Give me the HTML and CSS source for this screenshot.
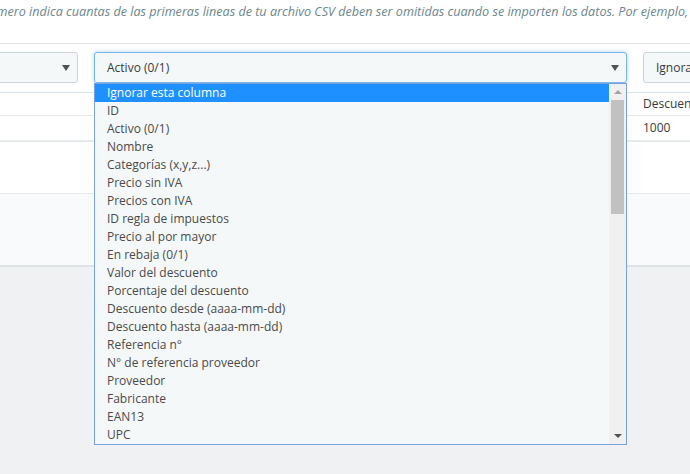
FILE: index.html
```html
<!DOCTYPE html>
<html lang="es">
<head>
<meta charset="utf-8">
<link rel="stylesheet" href="styles.css">
</head>
<body>
<div class="panel">
  <p class="help"><span class="help-text">número indica cuantas de las primeras lineas de tu archivo CSV deben ser omitidas cuando se importen los datos. Por ejemplo, establece este valor a 1 para omitir la cabecera.</span></p>
  <div class="table-clip">
    <div class="table">
      <div class="row select-row">
        <div class="cell"><div class="select"><span class="sel-text"></span><span class="caret"></span></div></div>
        <div class="cell">
          <div class="select-wrap">
            <div class="select focused"><span class="sel-text">Activo (0/1)</span><span class="caret"></span></div>
            <div class="dropdown">
              <ul class="options">
                <li class="active">Ignorar esta columna</li>
                <li>ID</li>
                <li>Activo (0/1)</li>
                <li>Nombre</li>
                <li>Categorías (x,y,z...)</li>
                <li>Precio sin IVA</li>
                <li>Precios con IVA</li>
                <li>ID regla de impuestos</li>
                <li>Precio al por mayor</li>
                <li>En rebaja (0/1)</li>
                <li>Valor del descuento</li>
                <li>Porcentaje del descuento</li>
                <li>Descuento desde (aaaa-mm-dd)</li>
                <li>Descuento hasta (aaaa-mm-dd)</li>
                <li>Referencia n°</li>
                <li>N° de referencia proveedor</li>
                <li>Proveedor</li>
                <li>Fabricante</li>
                <li>EAN13</li>
                <li>UPC</li>
              </ul>
              <div class="scrollbar">
                <span class="arrow up"></span>
                <span class="thumb"></span>
                <span class="arrow down"></span>
              </div>
            </div>
          </div>
        </div>
        <div class="cell"><div class="select"><span class="sel-text">Ignorar esta columna</span><span class="caret"></span></div></div>
      </div>
      <div class="row head-row">
        <div class="cell"></div>
        <div class="cell"></div>
        <div class="cell">Descuento</div>
      </div>
      <div class="row data-row">
        <div class="cell"></div>
        <div class="cell"></div>
        <div class="cell">1000</div>
      </div>
    </div>
  </div>
  <div class="spacer"></div>
  <div class="footer"></div>
</div>
</body>
</html>
```

FILE: styles.css
```css
* { box-sizing: border-box; }
html, body { margin: 0; padding: 0; }
body {
  background: #eff1f2;
  font-family: "Open Sans", "Liberation Sans", sans-serif;
  font-size: 12px;
  color: #363a41;
  width: 690px;
  height: 474px;
  overflow: hidden;
}
.panel {
  background: #fff;
  border-bottom: 2px solid #dde2e4;
}
.help {
  margin: 0;
  height: 44px;
  border-bottom: 1px solid #e1e4e6;
  white-space: nowrap;
  overflow: hidden;
  line-height: 24px;
  font-style: italic;
  font-size: 12.6px;
  color: #6c868e;
}
.help-text { display: inline-block; margin-left: -18px; }
.table-clip { position: relative; }
.table { margin-left: -100px; width: 1000px; }
.row {
  display: grid;
  grid-template-columns: 186px 549px 265px;
}
.select-row .cell { padding: 8px 8px 9px; }
.select-wrap { position: relative; }
.select {
  position: relative;
  height: 31px;
  border: 1px solid #c9d7db;
  border-radius: 3px;
  background: #f5f8f9;
  padding: 0 12px;
  line-height: 29px;
  white-space: nowrap;
  overflow: hidden;
  color: #363a41;
}
.select.focused {
  border-color: #7cb3e8;
  box-shadow: 0 0 4px rgba(102, 175, 233, 0.55);
}
.caret {
  position: absolute;
  right: 7px;
  top: 12px;
  width: 0;
  height: 0;
  border-left: 4px solid transparent;
  border-right: 4px solid transparent;
  border-top: 6px solid #505355;
}
.head-row .cell, .data-row .cell {
  padding: 0 8px;
  white-space: nowrap;
  overflow: hidden;
}
.head-row {
  border-top: 1px solid #d8e3e7;
  height: 23px;
  line-height: 22px;
}
.data-row {
  border-top: 1px solid #e6e9ea;
  border-bottom: 2px solid #e6e9eb;
  height: 27px;
  line-height: 24px;
}
.spacer { height: 51px; }
.footer {
  height: 72px;
  background: #f8fafb;
  border-top: 1px solid #e6e9ea;
}
.dropdown {
  position: absolute;
  top: 31px;
  left: 0;
  width: 533px;
  height: 362px;
  border: 1px solid #7aa2e0;
  background: #f5f8f9;
  display: flex;
  z-index: 5;
}
.options {
  list-style: none;
  margin: 0;
  padding: 0;
  flex: 1;
}
.options li {
  height: 18px;
  line-height: 18px;
  padding-left: 12px;
  color: #4a4a4a;
  white-space: nowrap;
}
.options li.active {
  background: #1e90ff;
  color: #fff;
}
.scrollbar {
  width: 17px;
  background: #f0f0f0;
  display: flex;
  flex-direction: column;
  align-items: center;
  position: relative;
}
.thumb {
  width: 13px;
  height: 114px;
  background: #c1c1c1;
}
.arrow {
  width: 0;
  height: 0;
  border-left: 4px solid transparent;
  border-right: 4px solid transparent;
}
.arrow.up {
  border-bottom: 4px solid #a3a3a3;
  margin: 6px 0 6px;
}
.arrow.down {
  position: absolute;
  bottom: 6px;
  border-top: 4px solid #505050;
}
```
